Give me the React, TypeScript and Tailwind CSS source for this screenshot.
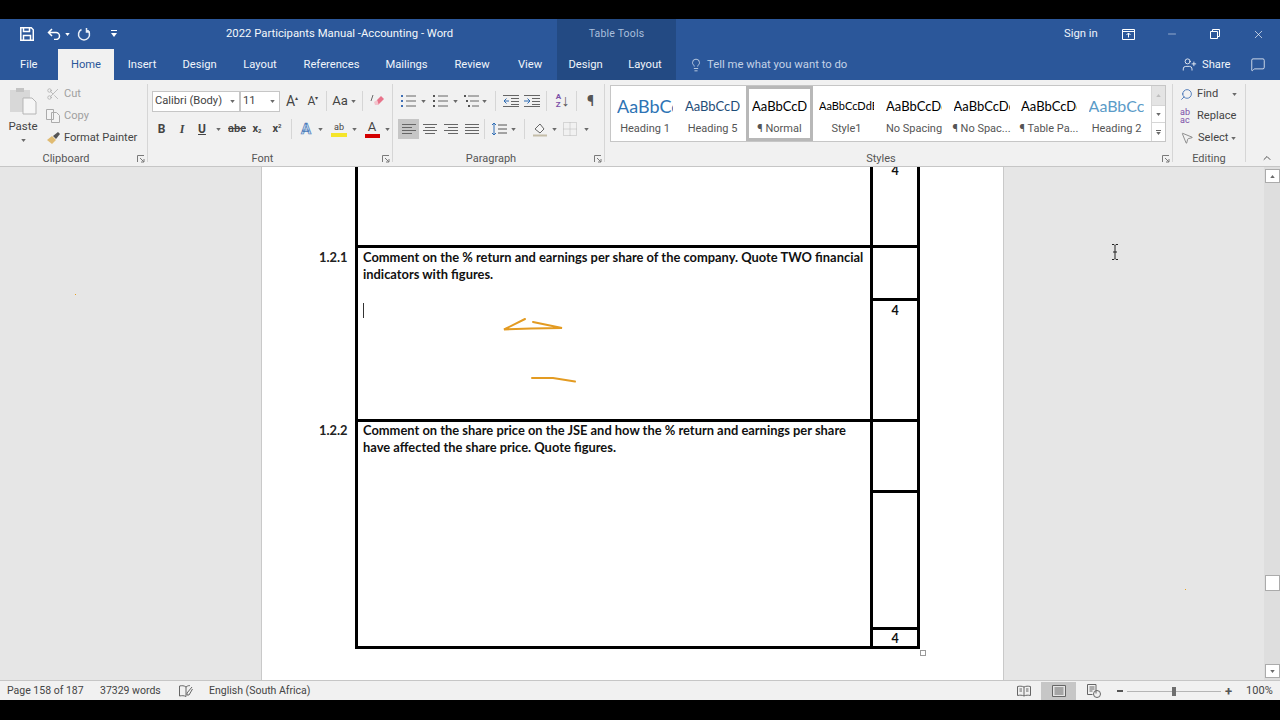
import type { ReactNode } from "react";
import { MessageSquare, Minus, Search, UserPlus, X, Lightbulb, ChevronUp, MousePointer2, Scissors } from "lucide-react";

function Caret({ className = "" }: { className?: string }) {
  return (
    <svg viewBox="0 0 6 4" className={`h-[3px] w-[5px] shrink-0 ${className}`}>
      <path d="M0 0h6L3 4z" fill="#6a6a6a" />
    </svg>
  );
}

function Launcher() {
  return (
    <svg viewBox="0 0 8 8" className="h-[8px] w-[8px]" fill="none" stroke="#7a7a7a" strokeWidth="1">
      <path d="M.5 7V.5H7M3 3l4 4M7 4v3H4" />
    </svg>
  );
}

function Group({ label, width, children, launcher = true }: { label: string; width: string; children: ReactNode; launcher?: boolean }) {
  return (
    <div className={`${width} my-[4px] flex shrink-0 flex-col border-r border-[#d6d6d6] pt-[7px]`}>
      <div className="h-[60px]">{children}</div>
      {launcher ? (
        <div className="mt-auto -mb-[4px] grid h-[14px] grid-cols-[1fr_10px] items-center text-[11px] leading-[14px] text-[#555]">
          <span className="pr-[5px] text-center">{label}</span>
          <Launcher />
        </div>
      ) : (
        <div className="mt-auto -mb-[4px] h-[14px] text-center text-[11px] leading-[14px] text-[#555]">{label}</div>
      )}
    </div>
  );
}

function Cell({ w, children }: { w: string; children: ReactNode }) {
  return <div className={`${w} flex h-[20px] shrink-0 items-center justify-center`}>{children}</div>;
}

function Sep({ x = "mx-[5px]" }: { x?: string }) {
  return <div className={`${x} h-[20px] w-px shrink-0 bg-[#d6d6d6]`} />;
}

// paragraph glyphs are just stacks of short lines
function Lines({ rows }: { rows: [number, number][] }) {
  return (
    <svg viewBox="0 0 14 12" className="h-[12px] w-[14px]" stroke="#666" strokeWidth="1">
      {rows.map(([a, b], i) => (
        <path key={i} d={`M${a} ${1.5 + i * 3}H${b}`} />
      ))}
    </svg>
  );
}

function ListIcon({ kind }: { kind: "bullet" | "num" | "multi" }) {
  const mark = kind === "bullet" ? "#3f6fb5" : "#555";
  return (
    <svg viewBox="0 0 16 14" className="h-[14px] w-[16px]" stroke="#666" strokeWidth="1">
      {[2, 7, 12].map((y, i) => (
        <g key={y}>
          <rect x={kind === "multi" ? i * 2 : 0} y={y - 1} width="2" height="2" fill={mark} stroke="none" />
          <path d={`M${kind === "multi" ? 4 + i * 2 : 5} ${y}H15`} />
        </g>
      ))}
    </svg>
  );
}

function IndentIcon({ right }: { right?: boolean }) {
  return (
    <svg viewBox="0 0 16 12" className="h-[12px] w-[16px]" fill="none" stroke="#666" strokeWidth="1">
      <path d="M0 .5h16M8 3.5h8M8 6.5h8M8 9.5h8M0 11.5h16" />
      <path d={right ? "M0 6h5M3.5 3.5L6 6 3.500 8.500" : "M6 6H1M3.500 3.500L1 6l2.500 2.500"} stroke="#2f6db5" />
    </svg>
  );
}

const styleItems = [
  { sample: "AaBbCcDd", label: "Heading 1", cls: "text-[18px] text-[#2e74b5] max-w-[56px]", w: "w-[68px]" },
  { sample: "AaBbCcD", label: "Heading 5", cls: "text-[13px] text-[#1f4d78] max-w-[56px]", w: "w-[67px]" },
  { sample: "AaBbCcDdE", label: "¶ Normal", cls: "text-[13px] text-black max-w-[55px]", w: "w-[67px]", sel: true },
  { sample: "AaBbCcDdEf", label: "Style1", cls: "text-[11px] text-black max-w-[55px]", w: "w-[67px]" },
  { sample: "AaBbCcDdE", label: "No Spacing", cls: "text-[13px] text-black max-w-[56px]", w: "w-[68px]" },
  { sample: "AaBbCcDdE", label: "¶ No Spac...", cls: "text-[13px] text-black max-w-[56px]", w: "w-[67px]" },
  { sample: "AaBbCcDdE", label: "¶ Table Pa...", cls: "text-[13px] text-black max-w-[56px]", w: "w-[68px]" },
  { sample: "AaBbCc", label: "Heading 2", cls: "text-[16px] text-[#5b9bc8] max-w-[56px]", w: "w-[67px]" },
];

const tabs = [
  { t: "Insert", w: "w-[56px]" },
  { t: "Design", w: "w-[59px]" },
  { t: "Layout", w: "w-[62px]" },
  { t: "References", w: "w-[81px]" },
  { t: "Mailings", w: "w-[69px]" },
  { t: "Review", w: "w-[62px]" },
  { t: "View", w: "w-[54px]" },
];

function TitleBar() {
  return (
    <div className="flex h-[30px] shrink-0 items-center bg-[#2b579a] text-[11.300px] text-[#f4f7fb]">
      <div className="flex w-[226px] shrink-0 items-center pl-[20px]">
        <svg viewBox="0 0 14 14" className="h-[14px] w-[14px]" fill="none" stroke="#fff" strokeWidth="1.500">
          <path d="M.8.8h10.500l2 2v10.400H.8zM3.500 1v3.500h6V1M3.500 13V8.500h7V13" />
        </svg>
        <svg viewBox="0 0 14 12" className="ml-[13px] h-[12px] w-[14px]" fill="none" stroke="#fff" strokeWidth="1.500">
          <path d="M5 1L1.500 4.500 5 8M1.500 4.500H9a3.500 3.500 0 0 1 0 7H7" />
        </svg>
        <Caret className="ml-[4px] [&>path]:fill-white" />
        <svg viewBox="0 0 14 14" className="ml-[7px] h-[14px] w-[14px]" fill="none" stroke="#e8eef7" strokeWidth="1.500">
          <path d="M4.500 2.500a5.500 5.500 0 1 0 5 0M9.500 1v4h3.500" />
        </svg>
        <svg viewBox="0 0 6 8" className="ml-[20px] h-[8px] w-[6px]" fill="#fff">
          <path d="M0 0h6v1H0zM0 3h6L3 7z" />
        </svg>
      </div>
      <div className="w-[331px] shrink-0">2022 Participants Manual -Accounting - Word</div>
      <div className="flex h-full w-[119px] shrink-0 items-center justify-center bg-[#234a83] text-[10.500px] tracking-[0.2px] text-[#a9bfdc]">
        Table Tools
      </div>
      <div className="ml-[388px] w-[58px] shrink-0 text-[#eef3fa]">Sign in</div>
      <svg viewBox="0 0 13 11" className="h-[11px] w-[13px]" fill="none" stroke="#fff">
        <path d="M.5.5h12v10H.5zM.5 2.500h12M6.500 8.500V4M4.500 6l2-2 2 2" />
      </svg>
      <Minus className="ml-[31px] h-[12px] w-[12px]" color="#fff" strokeWidth={1} />
      <svg viewBox="0 0 10 10" className="ml-[32px] h-[10px] w-[10px]" fill="none" stroke="#fff">
        <path d="M.5 2.500h7v7h-7zM2.500 2.500v-2h7v7h-2" />
      </svg>
      <X className="ml-[32px] h-[13px] w-[13px]" color="#fff" strokeWidth={1.200} />
    </div>
  );
}

function TabBar() {
  return (
    <div className="flex h-[31px] shrink-0 items-center bg-[#2b579a] text-[11.200px] text-[#f1f5fa]">
      <div className="flex h-full w-[58px] shrink-0 items-center pl-[20px] pt-[1px]">File</div>
      <div className="flex h-full w-[56px] shrink-0 items-center justify-center bg-[#f1f1f1] pt-[1px] text-[#2b579a]">Home</div>
      {tabs.map((t) => (
        <div key={t.t} className={`${t.w} shrink-0 pt-[1px] text-center`}>
          {t.t}
        </div>
      ))}
      <div className="flex h-full w-[119px] shrink-0 items-center bg-[#234a83] pt-[1px]">
        <span className="w-[57px] text-center">Design</span>
        <span className="w-[62px] text-center">Layout</span>
      </div>
      <Lightbulb className="ml-[13px] h-[14px] w-[14px]" color="#dfe8f4" strokeWidth={1.300} />
      <div className="ml-[4px] w-[489px] shrink-0 pt-[1px] text-[11.300px] text-[#c3d2e7]">Tell me what you want to do</div>
      <UserPlus className="-ml-[14px] h-[15px] w-[15px]" color="#fff" strokeWidth={1.300} />
      <div className="ml-[5px] w-[48px] shrink-0 pt-[1px]">Share</div>
      <MessageSquare className="h-[15px] w-[16px]" color="#fff" strokeWidth={1.200} />
    </div>
  );
}

function Clipboard() {
  return (
    <Group label="Clipboard" width="w-[148px]">
      <div className="flex">
        <div className="-mt-[4px] flex w-[46px] shrink-0 flex-col items-center">
          <svg viewBox="0 0 28 28" className="h-[28px] w-[28px]">
            <path d="M1 3h20v22H1z" fill="#d8d8d8" />
            <path d="M7 1h8v4H7z" fill="#c4c4c4" />
            <path d="M14 11h9l4 4v12H14z" fill="#f6f6f6" stroke="#b5b5b5" />
          </svg>
          <div className="mt-[4px] text-[11.500px] leading-[14px] text-[#444]">Paste</div>
          <Caret className="mt-[6px]" />
        </div>
        <div className="-mt-[8px] text-[11.100px] text-[#444]">
          <div className="flex h-[22px] items-center">
            <Scissors className="h-[14px] w-[14px]" color="#a8a8a8" strokeWidth={1.200} />
            <span className="ml-[4px] text-[#a0a0a0]">Cut</span>
          </div>
          <div className="flex h-[22px] items-center">
            <svg viewBox="0 0 14 14" className="h-[14px] w-[14px]" fill="#f4f4f4" stroke="#ababab">
              <path d="M.5.5h7v10h-7zM5.500 3.500h5l3 3v7h-8z" />
            </svg>
            <span className="ml-[4px] text-[#a0a0a0]">Copy</span>
          </div>
          <div className="flex h-[22px] items-center">
            <svg viewBox="0 0 14 14" className="h-[14px] w-[14px]">
              <path d="M1 9l5-4 4 4-4 4z" fill="#e0bb72" />
              <path d="M7 5l5-4 2 2-4 5z" fill="#555" />
            </svg>
            <span className="ml-[4px] whitespace-nowrap">Format Painter</span>
          </div>
        </div>
      </div>
    </Group>
  );
}

function Font() {
  return (
    <Group label="Font" width="w-[245px]">
      <div className="flex h-[20px] items-center pl-[4px] text-[#444]">
        <div className="flex h-[21px] w-[88px] shrink-0 items-center justify-between border border-[#c6c6c6] bg-white pl-[2px] pr-[4px] text-[11.200px]">
          Calibri (Body) <Caret />
        </div>
        <div className="flex h-[21px] w-[40px] shrink-0 items-center justify-between border border-[#c6c6c6] bg-white pl-[2px] pr-[4px] text-[11.200px]">
          11 <Caret />
        </div>
        <Cell w="w-[22px] ml-[1px] text-[14px]">A<sup className="text-[6px]">▴</sup></Cell>
        <Cell w="w-[20px] text-[12px]">A<sup className="text-[6px]">▾</sup></Cell>
        <Sep x="ml-[3px] mr-[3px]" />
        <Cell w="w-[20px] text-[13px]">Aa</Cell>
        <Caret className="ml-[1px]" />
        <Sep x="ml-[6px] mr-[5px]" />
        <Cell w="w-[18px]">
          <svg viewBox="0 0 14 14" className="h-[14px] w-[14px]">
            <path d="M7 6l4-4 3 3-6 6z" fill="#e8738a" />
            <path d="M4 8l3-2 2 5H5z" fill="#f3c4cd" />
            <path d="M3 1L1 7" stroke="#6a6a6a" />
          </svg>
        </Cell>
      </div>
      <div className="mt-[8px] flex h-[20px] items-center pl-[3px] text-[#444]">
        <Cell w="w-[21px] font-bold text-[12px]">B</Cell>
        <Cell w="w-[20px] italic font-bold text-[12px] font-['Liberation_Serif',serif]">I</Cell>
        <Cell w="w-[20px] underline font-bold text-[12px]">U</Cell>
        <Caret className="ml-[4px] mr-[5px]" />
        <Cell w="w-[22px] text-[11px] line-through font-semibold">abc</Cell>
        <Cell w="w-[18px] text-[11px] font-bold">x<sub className="text-[6px]">2</sub></Cell>
        <Cell w="w-[22px] text-[11px] font-bold">x<sup className="text-[6px]">2</sup></Cell>
        <Sep x="ml-[3px] mr-[4px]" />
        <Cell w="w-[20px] text-[15px] font-bold text-[#c6d9f0] [-webkit-text-stroke:0.7px_#4a7ab8]">A</Cell>
        <Caret className="ml-[2px] mr-[6px]" />
        <div className="flex w-[20px] shrink-0 flex-col items-center">
          <span className="text-[9px] leading-[12px]">ab</span>
          <div className="h-[4px] w-[16px] bg-[#f5e52a]" />
        </div>
        <Caret className="ml-[3px] mr-[5px]" />
        <div className="flex w-[20px] shrink-0 flex-col items-center">
          <span className="text-[13px] leading-[14px]">A</span>
          <div className="h-[4px] w-[15px] bg-[#d40000]" />
        </div>
        <Caret className="ml-[3px]" />
      </div>
    </Group>
  );
}

function Paragraph() {
  return (
    <Group label="Paragraph" width="w-[212px]">
      <div className="flex h-[20px] items-center pl-[5px]">
        <Cell w="w-[21px]"><ListIcon kind="bullet" /></Cell>
        <Caret className="ml-[2px] mr-[4px]" />
        <Cell w="w-[21px]"><ListIcon kind="num" /></Cell>
        <Caret className="ml-[2px] mr-[4px]" />
        <Cell w="w-[20px]"><ListIcon kind="multi" /></Cell>
        <Caret className="mr-[3px]" />
        <Sep x="ml-[5px] mr-[4px]" />
        <Cell w="w-[21px]"><IndentIcon /></Cell>
        <Cell w="w-[21px]"><IndentIcon right /></Cell>
        <Sep x="ml-[4px] mr-[5px]" />
        <Cell w="w-[21px]">
          <div className="flex items-center">
            <span className="text-[8px] font-bold leading-[8px] text-[#7b4fa8]">A<br />Z</span>
            <span className="text-[16px] leading-none text-[#555]">↓</span>
          </div>
        </Cell>
        <Sep x="ml-[3px] mr-[3px]" />
        <Cell w="w-[21px] text-[14px] text-[#555] font-bold">¶</Cell>
      </div>
      <div className="mt-[8px] flex h-[20px] items-center pl-[5px]">
        <Cell w="w-[21px] bg-[#c6c6c6]"><Lines rows={[[0, 14], [0, 10], [0, 14], [0, 10]]} /></Cell>
        <Cell w="w-[21px]"><Lines rows={[[0, 14], [2, 12], [0, 14], [2, 12]]} /></Cell>
        <Cell w="w-[21px]"><Lines rows={[[0, 14], [4, 14], [0, 14], [4, 14]]} /></Cell>
        <Cell w="w-[21px]"><Lines rows={[[0, 14], [0, 14], [0, 14], [0, 14]]} /></Cell>
        <Sep x="ml-[2px] mr-[5px]" />
        <Cell w="w-[18px]">
          <svg viewBox="0 0 16 14" className="h-[14px] w-[16px]" fill="none" stroke="#555">
            <path d="M7 3h9M7 7h9M7 11h9" />
            <path d="M3 1v12M1 3l2-2 2 2M1 11l2 2 2-2" stroke="#2f6db5" />
          </svg>
        </Cell>
        <Caret className="ml-[3px] mr-[5px]" />
        <Sep x="ml-[3px] mr-[5px]" />
        <Cell w="w-[20px]">
          <svg viewBox="0 0 16 16" className="h-[16px] w-[16px]" fill="none" stroke="#666">
            <path d="M3 8l5-5 4 5-4 4z" fill="#f6f6f6" />
            <path d="M1 14.500h14" stroke="#c4bda8" strokeWidth="2" />
          </svg>
        </Cell>
        <Caret className="ml-[2px] mr-[3px]" />
        <Cell w="w-[20px]">
          <svg viewBox="0 0 14 14" className="h-[14px] w-[14px]" fill="none" stroke="#b9b9b9" strokeDasharray="1 1">
            <path d="M.5.500h13v13H.5zM7 .5v13M.5 7h13" />
          </svg>
        </Cell>
        <Caret className="ml-[4px]" />
      </div>
    </Group>
  );
}

function Styles() {
  return (
    <Group label="Styles" width="w-[568px]">
      <div className="-mt-[6px] ml-[5px] flex h-[57px] w-[556px] border border-[#c6c6c6] bg-white">
        <div className="flex">
          {styleItems.map((s) => (
            <div
              key={s.label}
              className={`${s.w} flex shrink-0 flex-col items-center overflow-hidden ${s.sel ? "border-[3px] border-[#b8b8b8] pt-[5px]" : "pt-[8px]"}`}
            >
              <div className={`${s.cls} h-[24px] overflow-hidden whitespace-nowrap font-['Lato',sans-serif] leading-[24px]`}>{s.sample}</div>
              <div className="mt-[3px] whitespace-nowrap text-[11px] leading-[16px] text-[#555]">{s.label}</div>
            </div>
          ))}
        </div>
        <div className="ml-auto flex w-[14px] shrink-0 flex-col border-l border-[#d6d6d6]">
          <div className="flex h-[19px] items-center justify-center bg-[#e4e4e4]">
            <Caret className="rotate-180 opacity-30" />
          </div>
          <div className="flex h-[18px] items-center justify-center border-y border-[#d6d6d6]"><Caret /></div>
          <div className="flex flex-1 flex-col items-center justify-center gap-[1px]">
            <div className="h-px w-[5px] bg-[#666]" />
            <Caret />
          </div>
        </div>
      </div>
    </Group>
  );
}

function Editing() {
  return (
    <Group label="Editing" width="w-[73px]" launcher={false}>
      <div className="-mt-[8px] pl-[7px] text-[11.100px] text-[#444]">
        <div className="flex h-[22px] items-center">
          <Search className="h-[13px] w-[13px] -scale-x-100" color="#3f6fb5" strokeWidth={1.600} />
          <span className="ml-[4px]">Find</span>
          <Caret className="ml-[14px]" />
        </div>
        <div className="flex h-[22px] items-center">
          <span className="w-[15px] text-[9px] leading-[8px] text-[#7b4fa8]">ab<br />ac</span>
          <span className="ml-[2px]">Replace</span>
        </div>
        <div className="flex h-[22px] items-center">
          <MousePointer2 className="h-[14px] w-[14px]" color="#666" strokeWidth={1.200} />
          <span className="ml-[4px]">Select</span>
          <Caret className="ml-[2px]" />
        </div>
      </div>
    </Group>
  );
}

function Ribbon() {
  return (
    <div className="flex h-[87px] shrink-0 border-b border-[#c6c6c6] bg-[#f1f1f1]">
      <Clipboard />
      <Font />
      <Paragraph />
      <Styles />
      <Editing />
      <ChevronUp className="ml-[15px] mt-[72px] h-[12px] w-[12px]" color="#555" strokeWidth={2} />
    </div>
  );
}

function RightCell({ children, h, last }: { children?: ReactNode; h: string; last?: boolean }) {
  return (
    <div className={`${h} ${last ? "" : "border-b-[3px] border-black"} text-center text-[12.500px] font-bold leading-[17px] text-[#111]`}>
      {children}
    </div>
  );
}

function Page() {
  return (
    <div className="flex w-[743px] shrink-0 flex-col overflow-hidden border-x border-[#c9c9c9] bg-white pl-[57px] font-['Lato',sans-serif] text-[12.900px]">
      {/* top row, clipped by the scroll position */}
      <div className="flex h-[81px] shrink-0">
        <div className="w-[36px] shrink-0" />
        <div className="w-[518px] shrink-0 border-x-[3px] border-b-[3px] border-black" />
        <div className="w-[47px] shrink-0 border-r-[3px] border-b-[3px] border-black">
          <RightCell h="h-[17px]" last>
            <div className="-mt-[5px]">4</div>
          </RightCell>
        </div>
      </div>
      <div className="flex h-[174px] shrink-0">
        <div className="w-[36px] shrink-0 pt-[1px] font-bold leading-[17px] text-[#222]">1.2.1</div>
        <div className="relative w-[518px] shrink-0 border-x-[3px] border-b-[3px] border-black pl-[5px] pt-[1px] font-bold leading-[17px] text-[#111]">
          <div className="w-[507px]">
            Comment on the % return and earnings per share of the company. Quote TWO financial indicators with figures.
          </div>
          <div className="mt-[20px] h-[15px] w-px bg-[#333]" />
          <svg viewBox="0 0 80 70" className="absolute left-[143px] top-[67px] h-[70px] w-[80px]" fill="none" stroke="#e39b22" strokeWidth="2" strokeLinecap="round">
            <path d="M24 4L3 14.500 30 13.500 61 13 32 7" />
            <path d="M31 63H52L74 66.500" />
          </svg>
        </div>
        <div className="w-[47px] shrink-0 border-r-[3px] border-b-[3px] border-black">
          <RightCell h="h-[53px]" />
          <div className="pt-[1px]">
            <RightCell h="h-[17px]" last>4</RightCell>
          </div>
        </div>
      </div>
      <div className="flex h-[227px] shrink-0">
        <div className="w-[36px] shrink-0 font-bold leading-[17px] text-[#222]">1.2.2</div>
        <div className="w-[518px] shrink-0 border-x-[3px] border-b-[3px] border-black pl-[5px] font-bold leading-[17px] text-[#111]">
          <div className="w-[507px]">
            Comment on the share price on the JSE and how the % return and earnings per share have affected the share price. Quote figures.
          </div>
        </div>
        <div className="w-[47px] shrink-0 border-r-[3px] border-b-[3px] border-black">
          <RightCell h="h-[71px]" />
          <RightCell h="h-[137px]" />
          <RightCell h="h-[16px]" last>4</RightCell>
        </div>
        <div className="mt-[228px] h-[6px] w-[6px] shrink-0 border border-[#9a9a9a] bg-white" />
      </div>
    </div>
  );
}

function Scrollbar() {
  return (
    <div className="flex w-[16px] shrink-0 flex-col items-center bg-[#dedede] py-[2px]">
      <div className="flex h-[14px] w-[15px] items-center justify-center border border-[#ababab] bg-white">
        <Caret className="rotate-180" />
      </div>
      <div className="mt-[392px] h-[16px] w-[15px] border border-[#ababab] bg-white" />
      <div className="mt-auto flex h-[14px] w-[15px] items-center justify-center border border-[#ababab] bg-white">
        <Caret />
      </div>
    </div>
  );
}

function Document() {
  return (
    <div className="relative flex min-h-0 flex-1 bg-[#e6e6e6]">
      <div className="w-[261px] shrink-0" />
      <Page />
      <div className="flex-1" />
      <Scrollbar />
      {/* stray ink dots and the mouse pointer sit over the canvas */}
      <div className="absolute left-[75px] top-[127px] h-[1px] w-[1px] bg-[#e8a020]" />
      <div className="absolute left-[1185px] top-[422px] h-[1px] w-[1px] bg-[#e8a020]" />
      <svg viewBox="0 0 8 16" className="absolute left-[1111px] top-[77px] h-[16px] w-[8px]" fill="none" stroke="#222">
        <path d="M1 .5h2l1 1 1-1h2M4 1.500v13M1 15.500h2l1-1 1 1h2M2 8h4" />
      </svg>
    </div>
  );
}

function StatusBar() {
  return (
    <div className="flex h-[20px] shrink-0 items-center border-t border-[#c6c6c6] bg-[#f1f1f1] pt-px text-[10.500px] text-[#444]">
      <span className="ml-[7px] w-[93px] shrink-0">Page 158 of 187</span>
      <span className="w-[79px] shrink-0">37329 words</span>
      <svg viewBox="0 0 14 12" className="h-[12px] w-[14px]" fill="none" stroke="#666">
        <path d="M7 2C5 .5 3 .5.500 1v10C3 10.500 5 10.500 7 11.500V2zM7 2c2-1.500 3-1.500 4-1.300M13 2L8 8v2h2l3.500-6" />
      </svg>
      <span className="ml-[16px] w-[808px] shrink-0">English (South Africa)</span>
      <svg viewBox="0 0 14 12" className="h-[12px] w-[14px]" fill="none" stroke="#666">
        <path d="M7 2C5 1 3 1 .5 1.500v9C3 10 5 10 7 11c2-1 4-1 6.500-.5v-9C11 1 9 1 7 2zM7 2v9M2.500 4h2.500M2.500 6h2.500M9 4h2.500M9 6h2.500" />
      </svg>
      <div className="ml-[10px] flex h-full w-[35px] shrink-0 items-center justify-center bg-[#c6c6c6]">
        <svg viewBox="0 0 14 12" className="h-[12px] w-[14px]" fill="#e4e4e4" stroke="#666">
          <path d="M.5.500h13v11H.5zM2.500 3h9M2.500 5h9M2.500 7h9M2.500 9h9" />
        </svg>
      </div>
      <svg viewBox="0 0 14 14" className="ml-[11px] h-[14px] w-[14px]" fill="none" stroke="#666">
        <path d="M9 9.500V.5H.5v10h5M2.500 3h5M2.500 5h5M2.500 7h3" />
        <circle cx="10" cy="10" r="3.500" />
      </svg>
      <span className="ml-[16px] h-[2px] w-[6px] shrink-0 bg-[#555]" />
      <div className="relative ml-[4px] h-px w-[94px] shrink-0 bg-[#b5b5b5]">
        <div className="absolute left-[45px] -top-[4px] h-[9px] w-[4px] bg-[#6e6e6e]" />
      </div>
      <span className="ml-[4px] shrink-0 text-[13px] font-bold leading-none text-[#555]">+</span>
      <span className="ml-[14px] shrink-0 text-[11px]">100%</span>
    </div>
  );
}

export default function App() {
  return (
    <div className="flex h-[720px] w-[1280px] flex-col overflow-hidden bg-black pb-[20px] pt-[19px] font-['Roboto',sans-serif]">
      <TitleBar />
      <TabBar />
      <Ribbon />
      <Document />
      <StatusBar />
    </div>
  );
}
